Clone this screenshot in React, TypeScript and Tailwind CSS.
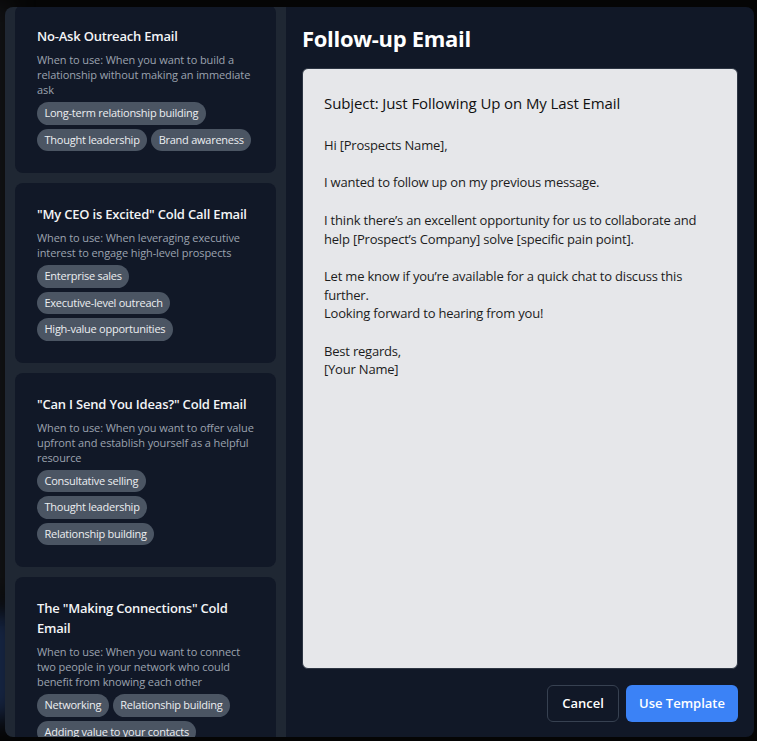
import React from "react";

type Tpl = { title: string; desc: string; tags: string[] };

const templates: Tpl[] = [
  {
    title: "No-Ask Outreach Email",
    desc: "When to use: When you want to build a relationship without making an immediate ask",
    tags: ["Long-term relationship building", "Thought leadership", "Brand awareness"],
  },
  {
    title: "\"My CEO is Excited\" Cold Call Email",
    desc: "When to use: When leveraging executive interest to engage high-level prospects",
    tags: ["Enterprise sales", "Executive-level outreach", "High-value opportunities"],
  },
  {
    title: "\"Can I Send You Ideas?\" Cold Email",
    desc: "When to use: When you want to offer value upfront and establish yourself as a helpful resource",
    tags: ["Consultative selling", "Thought leadership", "Relationship building"],
  },
  {
    title: "The \"Making Connections\" Cold Email",
    desc: "When to use: When you want to connect two people in your network who could benefit from knowing each other",
    tags: ["Networking", "Relationship building", "Adding value to your contacts"],
  },
];

const body = `Hi [Prospects Name],

I wanted to follow up on my previous message.

I think there’s an excellent opportunity for us to collaborate and help [Prospect’s Company] solve [specific pain point].

Let me know if you’re available for a quick chat to discuss this further.
Looking forward to hearing from you!

Best regards,
[Your Name]`;

function Card({ t, first }: { t: Tpl; first?: boolean }) {
  return (
    <div
      className={
        first
          ? "-mt-[2px] shrink-0 rounded-lg bg-[#111827] px-[22px] pt-[21px] pb-[22px]"
          : "shrink-0 rounded-lg bg-[#111827] px-[22px] pt-[21px] pb-[22px]"
      }
    >
      <div className="mb-[6px] text-[13px] font-semibold leading-[20px] tracking-[-0.2px] text-[#f3f4f6]">
        {t.title}
      </div>
      <div className="text-[11px] leading-[15px] tracking-[-0.1px] text-[#9ca3af]">{t.desc}</div>
      <div className="mt-[5px] flex flex-wrap gap-[4px]">
        {t.tags.map((g) => (
          <span
            key={g}
            className="flex h-[22.5px] items-center whitespace-nowrap rounded-full bg-[#4b5563] px-[7.5px] text-[11px] font-medium tracking-[-0.25px] text-[#eceef1]"
          >
            {g}
          </span>
        ))}
      </div>
    </div>
  );
}

export default function App() {
  return (
    <div
      className="relative h-[741px] w-[757px] overflow-hidden bg-[#050505] pl-[5px] pt-[7px]"
      style={{ fontFamily: '"Open Sans", "Noto Sans", sans-serif' }}
    >
      <div className="absolute left-[-14px] top-[610px] h-[110px] w-[26px] rounded-full bg-[#2a4a8a] opacity-60 blur-md" />
      <div className="absolute left-[-14px] top-[0px] h-[600px] w-[24px] bg-[#1a1c20] opacity-70 blur-md" />
      <div className="relative flex h-[730px] w-[749px] overflow-hidden rounded-lg">
        <div className="flex w-[281px] shrink-0 flex-col gap-[10px] overflow-hidden bg-[#1f2733] px-[10px]">
          {templates.map((t, i) => (
            <Card key={t.title} t={t} first={i === 0} />
          ))}
        </div>
        <div className="flex flex-1 flex-col bg-[#111827] px-[16px] pt-[16px] pb-[15px]">
          <h2 className="mb-[15px] text-[22px] font-bold leading-[30px] tracking-[-0.3px] text-white">
            Follow-up Email
          </h2>
          <div className="flex-1 rounded-md border border-[#2d3543] bg-[#e6e7ea] px-[21px] pt-[23px]">
            <div className="mb-[22px] text-[15px] font-medium leading-[22px] tracking-[-0.1px] text-[#111111]">
              Subject: Just Following Up on My Last Email
            </div>
            <div className="whitespace-pre-wrap text-[13px] leading-[18.7px] tracking-[-0.2px] text-[#1c1c1c]">
              {body}
            </div>
          </div>
          <div className="mt-[16px] flex justify-end gap-[7px]">
            <button className="h-[37px] w-[72px] rounded-md border border-[#374151] bg-[#111827] text-[13px] font-semibold text-white">
              Cancel
            </button>
            <button className="h-[37px] w-[112px] rounded-md bg-[#3b82f6] text-[13px] font-semibold text-white">
              Use Template
            </button>
          </div>
        </div>
      </div>
    </div>
  );
}
